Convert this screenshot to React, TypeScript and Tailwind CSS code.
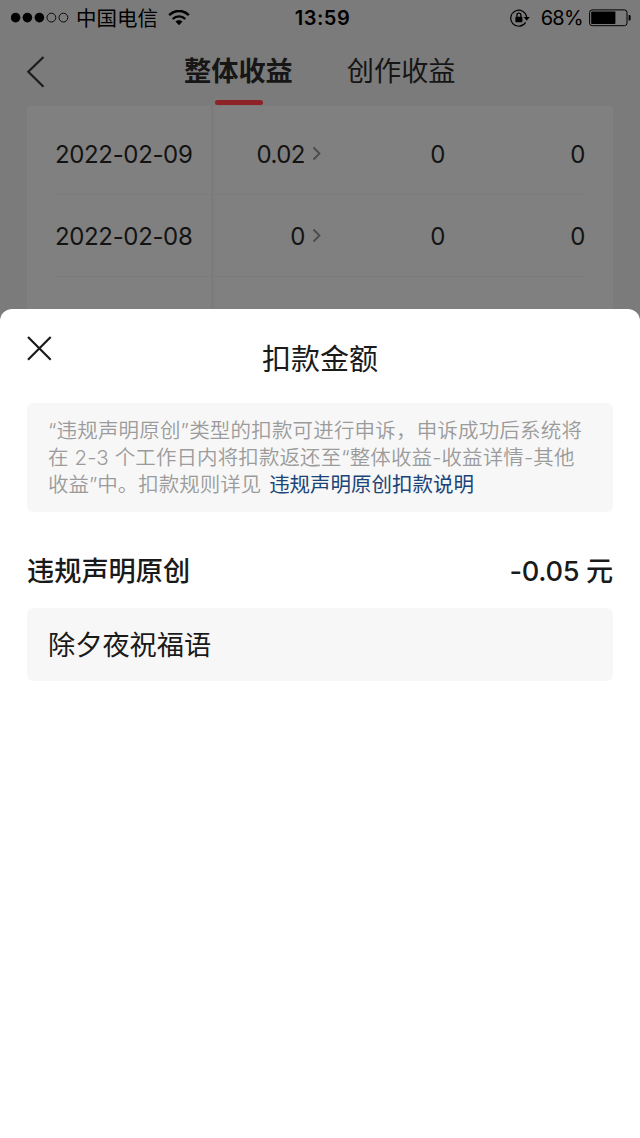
const rows = [
  { date: '2022-02-09', total: '0.02', base: '0', other: '0' },
  { date: '2022-02-08', total: '0', base: '0', other: '0' },
];

const SignalDots = () => (
  <svg width="58" height="12" viewBox="0 0 58 12" fill="none">
    <circle cx="4.6" cy="5.6" r="4.8" fill="#000" />
    <circle cx="16.4" cy="5.6" r="4.8" fill="#000" />
    <circle cx="28.4" cy="5.6" r="4.8" fill="#000" />
    <circle cx="40.4" cy="5.6" r="4.4" stroke="#000" strokeWidth="0.9" />
    <circle cx="52.4" cy="5.6" r="4.4" stroke="#000" strokeWidth="0.9" />
  </svg>
);

const WifiIcon = () => (
  <svg width="22" height="16" viewBox="0 0 22 16" fill="none">
    <path d="M1.2 5.2C6.8-.5 15.2-.5 20.8 5.2" stroke="#000" strokeWidth="2.5" />
    <path d="M4.700 9C8.300 5.500 13.700 5.500 17.300 9" stroke="#000" strokeWidth="2.400" />
    <path d="M11 15.200L7.500 11.600C9.500 9.700 12.500 9.700 14.500 11.600Z" fill="#000" />
  </svg>
);

const RotationLockIcon = () => (
  <svg className="-mt-px" width="20" height="18" viewBox="0 0 20 18" fill="none">
    <path d="M15.600 13.400A8 8 0 1 1 16.700 8.200" stroke="#000" strokeWidth="1.200" />
    <path d="M13.600 7.900H19.800L16.700 11.700Z" fill="#000" />
    <rect x="5.400" y="7.800" width="7" height="5.400" rx="0.600" fill="#000" />
    <path d="M6.900 8V6.200a2 2 0 0 1 4 0V8" stroke="#000" strokeWidth="1.300" />
  </svg>
);

const BatteryIcon = () => (
  <svg className="-mt-px" width="43" height="18" viewBox="0 0 43 18" fill="none">
    <rect x="0.600" y="0.900" width="37.400" height="15.800" rx="2.600" stroke="#000" strokeWidth="1" />
    <rect x="2.200" y="2.500" width="24.200" height="12.600" rx="0.800" fill="#000" />
    <path d="M39.600 6h.8q1.200 0 1.200 1.300v3q0 1.300-1.200 1.300h-.8z" fill="#000" />
  </svg>
);

const StatusBar = () => (
  <div className="flex h-9 items-center justify-between pl-[11px] pr-[8px] text-black">
    <div className="flex w-[240px] items-center">
      <SignalDots />
      <span className="ml-[7px] pt-px text-[20.5px] leading-9">中国电信</span>
      <span className="ml-[10px]">
        <WifiIcon />
      </span>
    </div>
    <span className="pl-0.5 text-[20px] font-semibold leading-9 tracking-[0.5px]">13:59</span>
    <div className="flex w-[240px] items-center justify-end">
      <RotationLockIcon />
      <span className="ml-[11px] mr-[6px] text-[20px] leading-9 tracking-[-0.7px]">68%</span>
      <BatteryIcon />
    </div>
  </div>
);

const NavBar = () => (
  <div className="flex h-[70px] items-start text-[27.2px] text-[#161616]">
    <svg className="ml-[26px] mt-[19px]" width="20" height="34" viewBox="0 0 20 34" fill="none">
      <path d="M17.500 2L2.300 16.800L17.500 31.800" stroke="#1c1c1c" strokeWidth="2.200" />
    </svg>
    <div className="ml-[138px] flex flex-col items-center">
      <span className="h-16 font-bold leading-[72px]">整体收益</span>
      <span className="ml-0.5 h-[5px] w-12 rounded-full bg-[#8f2226]" />
    </div>
    <span className="ml-[54px] leading-[72px]">创作收益</span>
  </div>
);

const EarningsTable = () => (
  <div className="mx-[27px] flex h-[203px] overflow-hidden rounded-t bg-[#808080] pt-[7px] text-[24px] text-[#131313]">
    <div className="w-[184px] pl-7">
      {rows.map(row => (
        <div key={row.date} className="flex h-[82px] items-center border-b border-[#7b7b7b] pt-0.5 tracking-[-0.35px]">
          {row.date}
        </div>
      ))}
    </div>
    <div className="-mt-[7px] w-1 bg-gradient-to-r from-[#7a7a7a] to-[#7f7f7f]" />
    <div className="mr-7 flex-1">
      {rows.map(row => (
        <div key={row.date} className="flex h-[82px] items-center border-b border-[#7b7b7b] pt-0.5">
          <div className="flex w-[107px] items-center justify-end">
            <span className="tracking-[-0.5px]">{row.total}</span>
            <svg className="-mt-0.5 ml-[7px]" width="10" height="16" viewBox="0 0 10 16" fill="none">
              <path d="M1.500 1.500L7.500 7.500L1.500 13.500" stroke="#4b4b4b" strokeWidth="1.800" />
            </svg>
          </div>
          <span className="w-[123px] text-right tracking-[-0.5px]">{row.base}</span>
          <span className="flex-1 text-right tracking-[-0.5px]">{row.other}</span>
        </div>
      ))}
    </div>
  </div>
);

const DeductionSheet = () => (
  <div className="flex-1 rounded-t-[12px] bg-white px-[27px] text-[#1a1a1a]">
    <div className="flex h-[94px] items-start">
      <svg className="mt-[27px]" width="25" height="25" viewBox="0 0 25 25" fill="none">
        <path d="M1 1L23.700 23.700M23.700 1L1 23.700" stroke="#1a1a1a" strokeWidth="2.200" />
      </svg>
      <h1 className="mr-[25px] flex-1 text-center text-[29px] leading-[101px]">扣款金额</h1>
    </div>
    <div className="h-[109px] whitespace-nowrap rounded-md bg-[#f7f7f7] px-[21px] pt-[14px] text-[20.5px] font-[350] leading-[27.3px] text-[#9b9b9b]">
      <p className="tracking-[0.18px]">“违规声明原创”类型的扣款可进行申诉，申诉成功后系统将</p>
      <p className="tracking-[0.1px]">在 2-3 个工作日内将扣款返还至“整体收益-收益详情-其他</p>
      <p className="-mt-px">
        收益”中。扣款规则详见 <a className="ml-0.5 font-normal text-[#1c4577]">违规声明原创扣款说明</a>
      </p>
    </div>
    <div className="flex h-24 items-center justify-between pt-6 text-[27.2px] font-medium">
      <span>违规声明原创</span>
      <span className="tracking-[-0.3px]">-0.05 元</span>
    </div>
    <div className="flex h-[73px] items-center rounded-md bg-[#f7f7f7] px-[21px] pt-[3px] text-[27.2px]">除夕夜祝福语</div>
  </div>
);

const App = () => {
  return (
    <div
      lang="zh-CN"
      className="flex h-[1138px] w-[640px] flex-col overflow-hidden bg-[#7b7b7b] font-[Inter,'Noto_Sans_CJK_SC',sans-serif]"
    >
      <StatusBar />
      <NavBar />
      <EarningsTable />
      <DeductionSheet />
    </div>
  );
};

export default App;
